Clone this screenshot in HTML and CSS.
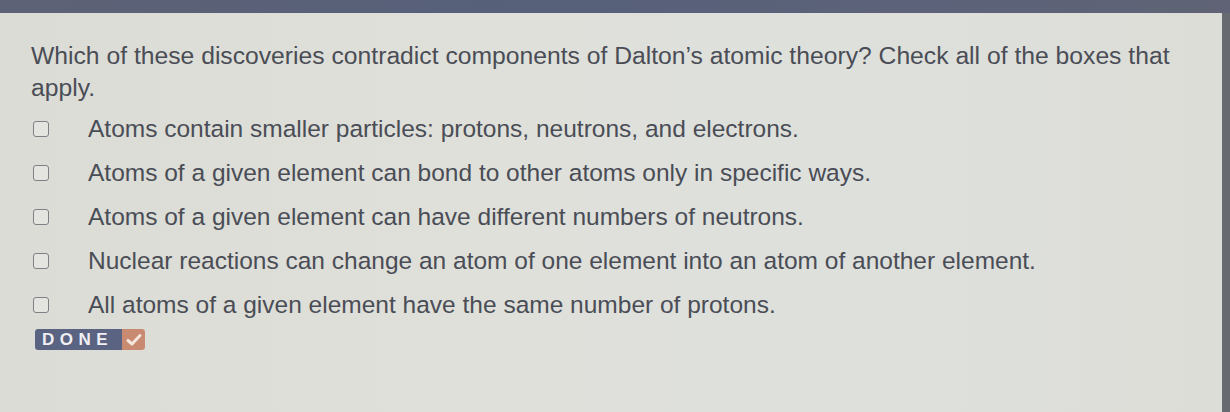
FILE: index.html
```html
<!DOCTYPE html>
<html>
<head>
<meta charset="utf-8">
<link rel="stylesheet" href="styles.css">
</head>
<body>
<div class="topbar"></div>
<div class="frame">
  <main class="panel">
    <p class="question">Which of these discoveries contradict components of Dalton’s atomic theory? Check all of the boxes that apply.</p>
    <ul class="options">
      <li class="option"><span class="box"></span><span class="label">Atoms contain smaller particles: protons, neutrons, and electrons.</span></li>
      <li class="option"><span class="box"></span><span class="label">Atoms of a given element can bond to other atoms only in specific ways.</span></li>
      <li class="option"><span class="box"></span><span class="label">Atoms of a given element can have different numbers of neutrons.</span></li>
      <li class="option"><span class="box"></span><span class="label">Nuclear reactions can change an atom of one element into an atom of another element.</span></li>
      <li class="option"><span class="box"></span><span class="label">All atoms of a given element have the same number of protons.</span></li>
    </ul>
    <button class="done"><span class="done-text">DONE</span><span class="done-check"><svg width="16" height="14" viewBox="0 0 16 14"><path d="M2 7.5 L6 11 L14 2.5" fill="none" stroke="#f4e6dc" stroke-width="3" stroke-linecap="round" stroke-linejoin="round"/></svg></span></button>
  </main>
  <div class="edge"></div>
</div>
</body>
</html>
```
FILE: styles.css
```css
html, body {
  margin: 0;
  padding: 0;
  height: 100%;
  background: #dcded8;
  overflow: hidden;
}
body {
  font-family: "Liberation Sans", Arial, sans-serif;
  color: #4a4d56;
}
.topbar {
  height: 13px;
  background: linear-gradient(90deg, #5e6276 0%, #566079 40%, #5b627a 70%, #5f6375 100%);
}
.frame {
  display: flex;
  height: 399px;
}
.panel {
  flex: 1;
  padding: 27px 0 0 31px;
  background: linear-gradient(90deg, #dbdcd5 0%, #dfe0da 40%, #dee0dc 70%, #dcddd7 100%);
}
.edge {
  width: 8px;
  background: #676a70;
}
.question {
  margin: 0;
  width: 1170px;
  font-size: 24.7px;
  line-height: 32px;
}
.options {
  list-style: none;
  margin: 3px 0 0;
  padding: 0;
}
.option {
  display: flex;
  align-items: center;
  height: 44px;
}
.box {
  width: 14px;
  height: 14px;
  border: 1.5px solid #7d8084;
  border-radius: 3px;
  margin-left: 2px;
  background: #e4e5e0;
}
.label {
  margin-left: 39px;
  font-size: 24.5px;
}
.done {
  margin-top: 2px;
  display: flex;
  padding: 0;
  border: 0;
  height: 21px;
  border-radius: 3px;
  overflow: hidden;
  margin-left: 4px;
}
.done-text {
  background: #5a6382;
  color: #f0f0f4;
  font-family: "Liberation Sans", Arial, sans-serif;
  font-weight: bold;
  font-size: 17px;
  letter-spacing: 5.5px;
  line-height: 21px;
  padding: 0 0 0 7px;
  width: 80px;
  text-align: left;
  white-space: nowrap;
}
.done-check {
  background: #c88a70;
  width: 23px;
  display: flex;
  align-items: center;
  justify-content: center;
}
```
